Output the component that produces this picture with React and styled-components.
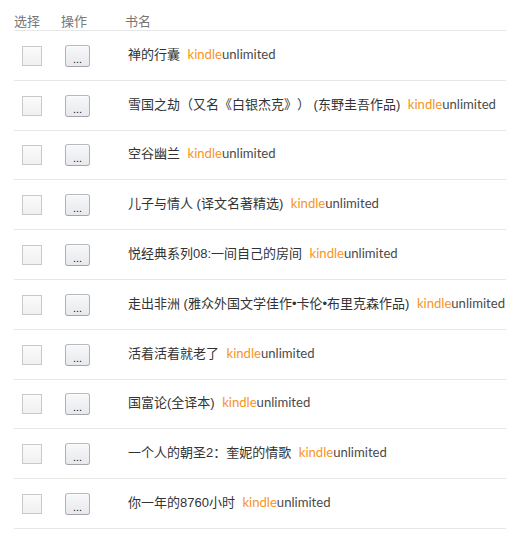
import React from "react";
import styled, { createGlobalStyle } from "styled-components";

const Global = createGlobalStyle`
  html, body { margin: 0; padding: 0; background: #fff; overflow: hidden; }
  body { font-family: "Liberation Sans", "Noto Sans CJK SC", sans-serif; }
`;

const Table = styled.div`
  margin-left: 14px;
  width: 492px;
  display: flex;
  flex-direction: column;
`;

const HeaderRow = styled.div`
  display: grid;
  grid-template-columns: 47px 64px 1fr;
  height: 30px;
  align-items: end;
  border-bottom: 1px solid #e7e7e7;
`;

const HeaderCell = styled.div`
  font-family: "Noto Sans CJK SC", sans-serif;
  font-size: 13px;
  line-height: 17px;
  padding-bottom: 1px;
  color: #777;
  white-space: nowrap;
`;

const Row = styled.div`
  display: grid;
  grid-template-columns: 47px 64px 1fr;
  height: 48.8px;
  align-items: center;
  border-bottom: 1px solid #e7e7e7;
`;

const Check = styled.span`
  display: block;
  box-sizing: border-box;
  width: 20px;
  height: 20px;
  margin-left: 8px;
  margin-top: 1px;
  border: 1px solid #c9c9c9;
  background: linear-gradient(to bottom, #fbfbfb, #f0f0f0);
`;

const MoreButton = styled.button`
  box-sizing: border-box;
  width: 25px;
  height: 22px;
  margin-left: 4px;
  margin-top: 1px;
  padding: 3px 0 0;
  border: 1px solid #adb1b8;
  border-top-color: #b6b9be;
  border-bottom-color: #a2a6ac;
  border-radius: 3px;
  background: linear-gradient(to bottom, #f7f8fa, #e7e9ec);
  box-shadow: inset 0 1px 0 rgba(255, 255, 255, 0.6);
  font-family: "Liberation Sans", sans-serif;
  font-size: 11px;
  line-height: 20px;
  color: #111;
  text-align: center;
`;

const Title = styled.div`
  padding-left: 3px;
  font-size: 13px;
  line-height: 17px;
  color: #333;
  white-space: nowrap;
  margin-top: -2px;
  text-spacing-trim: space-all;
`;

const Badge = styled.span`
  font-family: "Lato", "Liberation Sans", sans-serif;
  font-size: 13.1px;
  margin-left: 7.5px;
`;

const Kindle = styled.span`
  color: #f7941d;
`;

const Unlimited = styled.span`
  color: #4a4a4a;
`;

const books = [
  "禅的行囊",
  "雪国之劫（又名《白银杰克》） (东野圭吾作品)",
  "空谷幽兰",
  "儿子与情人 (译文名著精选)",
  "悦经典系列08:一间自己的房间",
  "走出非洲 (雅众外国文学佳作•卡伦•布里克森作品)",
  "活着活着就老了",
  "国富论(全译本)",
  "一个人的朝圣2：奎妮的情歌",
  "你一年的8760小时",
];

export default function App() {
  return (
    <>
      <Global />
      <Table>
        <HeaderRow>
          <HeaderCell>选择</HeaderCell>
          <HeaderCell>操作</HeaderCell>
          <HeaderCell>书名</HeaderCell>
        </HeaderRow>
        {books.map((title) => (
          <Row key={title}>
            <div>
              <Check />
            </div>
            <div>
              <MoreButton>...</MoreButton>
            </div>
            <Title>
              {title}
              <Badge>
                <Kindle>kindle</Kindle>
                <Unlimited>unlimited</Unlimited>
              </Badge>
            </Title>
          </Row>
        ))}
      </Table>
    </>
  );
}
